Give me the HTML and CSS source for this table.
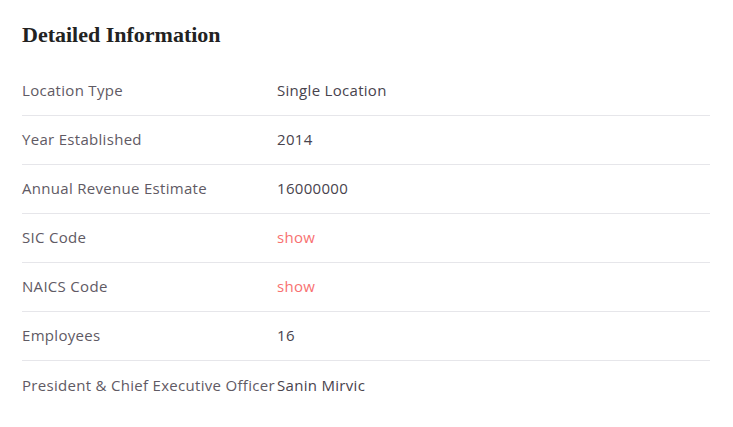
FILE: index.html
```html
<!DOCTYPE html>
<html>
<head>
<meta charset="utf-8">
<link rel="stylesheet" href="styles.css">
</head>
<body>
<section class="card">
  <h2 class="title">Detailed Information</h2>
  <div class="rows">
    <div class="row"><div class="label">Location Type</div><div class="value">Single Location</div></div>
    <div class="row"><div class="label">Year Established</div><div class="value">2014</div></div>
    <div class="row"><div class="label">Annual Revenue Estimate</div><div class="value">16000000</div></div>
    <div class="row"><div class="label">SIC Code</div><div class="value link">show</div></div>
    <div class="row"><div class="label">NAICS Code</div><div class="value link">show</div></div>
    <div class="row"><div class="label">Employees</div><div class="value">16</div></div>
    <div class="row last"><div class="label">President &amp; Chief Executive Officer</div><div class="value">Sanin Mirvic</div></div>
  </div>
</section>
</body>
</html>
```
FILE: styles.css
```css
html, body { margin: 0; padding: 0; background: #fff; }
.card { padding: 20px 23px 0 22px; }
.title {
  margin: 0;
  font-family: "Liberation Serif", serif;
  font-weight: bold;
  font-size: 22px;
  color: #222;
  line-height: 30px;
}
.rows { margin-top: 17px; }
.row {
  display: flex;
  align-items: center;
  box-sizing: border-box;
  height: 49px;
  padding-bottom: 2px;
  border-bottom: 1px solid #e6e6ea;
  font-family: "Open Sans", sans-serif;
  font-size: 15px;
  letter-spacing: 0.3px;
}
.row.last { border-bottom: none; }
.label { width: 255px; flex: none; color: #5f5a64; white-space: nowrap; }
.value { color: #48434d; }
.value.link { color: #f87171; }
```
